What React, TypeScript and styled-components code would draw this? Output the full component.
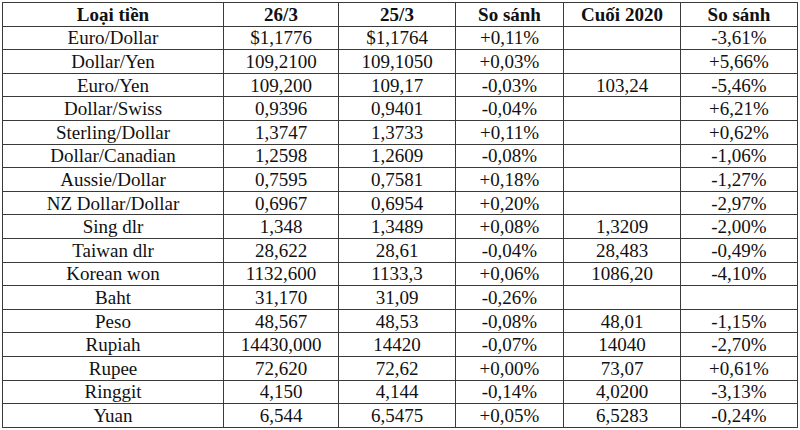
import styled, { createGlobalStyle } from "styled-components";

const GlobalStyle = createGlobalStyle`
  html, body {
    margin: 0;
    padding: 0;
    background: #fff;
  }
`;

const Page = styled.div`
  padding: 2px 0 0 2px;
  width: 800px;
  height: 430px;
  box-sizing: border-box;
  background: #fff;
`;

const Table = styled.table`
  border-collapse: collapse;
  table-layout: fixed;
  width: 796px;
  font-family: "Liberation Serif", "Times New Roman", serif;
  font-size: 19px;
  color: #111;
`;

const Row = styled.tr`
  height: 23.6px;
`;

const Cell = styled.td<{ $head?: boolean }>`
  border: 1px solid #3a3a3a;
  padding: 0;
  text-align: center;
  vertical-align: middle;
  line-height: 21px;
  white-space: nowrap;
  font-weight: ${(p) => (p.$head ? 700 : 400)};
`;

const widths = [221, 115, 117, 108, 117, 117];

const header = ["Loại tiền", "26/3", "25/3", "So sánh", "Cuối 2020", "So sánh"];

const rows: string[][] = [
  ["Euro/Dollar", "$1,1776", "$1,1764", "+0,11%", "", "-3,61%"],
  ["Dollar/Yen", "109,2100", "109,1050", "+0,03%", "", "+5,66%"],
  ["Euro/Yen", "109,200", "109,17", "-0,03%", "103,24", "-5,46%"],
  ["Dollar/Swiss", "0,9396", "0,9401", "-0,04%", "", "+6,21%"],
  ["Sterling/Dollar", "1,3747", "1,3733", "+0,11%", "", "+0,62%"],
  ["Dollar/Canadian", "1,2598", "1,2609", "-0,08%", "", "-1,06%"],
  ["Aussie/Dollar", "0,7595", "0,7581", "+0,18%", "", "-1,27%"],
  ["NZ Dollar/Dollar", "0,6967", "0,6954", "+0,20%", "", "-2,97%"],
  ["Sing dlr", "1,348", "1,3489", "+0,08%", "1,3209", "-2,00%"],
  ["Taiwan dlr", "28,622", "28,61", "-0,04%", "28,483", "-0,49%"],
  ["Korean won", "1132,600", "1133,3", "+0,06%", "1086,20", "-4,10%"],
  ["Baht", "31,170", "31,09", "-0,26%", "", ""],
  ["Peso", "48,567", "48,53", "-0,08%", "48,01", "-1,15%"],
  ["Rupiah", "14430,000", "14420", "-0,07%", "14040", "-2,70%"],
  ["Rupee", "72,620", "72,62", "+0,00%", "73,07", "+0,61%"],
  ["Ringgit", "4,150", "4,144", "-0,14%", "4,0200", "-3,13%"],
  ["Yuan", "6,544", "6,5475", "+0,05%", "6,5283", "-0,24%"],
];

export default function App() {
  return (
    <>
      <GlobalStyle />
      <Page>
        <Table>
          <colgroup>
            {widths.map((w, i) => (
              <col key={i} style={{ width: w }} />
            ))}
          </colgroup>
          <thead>
            <Row>
              {header.map((h, i) => (
                <Cell as="th" key={i} $head>
                  {h}
                </Cell>
              ))}
            </Row>
          </thead>
          <tbody>
            {rows.map((r, i) => (
              <Row key={i}>
                {r.map((c, j) => (
                  <Cell key={j}>{c}</Cell>
                ))}
              </Row>
            ))}
          </tbody>
        </Table>
      </Page>
    </>
  );
}
